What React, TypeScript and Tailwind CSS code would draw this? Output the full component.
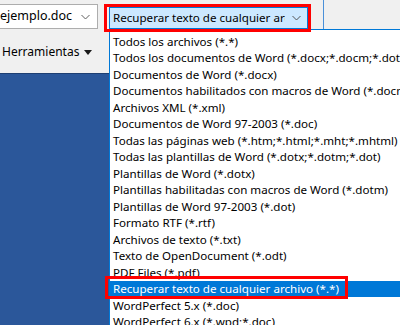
import React from "react";

const items = [
  "Todos los archivos (*.*)",
  "Todos los documentos de Word (*.docx;*.docm;*.dotx;*.dotm;*.doc;*.dot)",
  "Documentos de Word (*.docx)",
  "Documentos habilitados con macros de Word (*.docm)",
  "Archivos XML (*.xml)",
  "Documentos de Word 97-2003 (*.doc)",
  "Todas las páginas web (*.htm;*.html;*.mht;*.mhtml)",
  "Todas las plantillas de Word (*.dotx;*.dotm;*.dot)",
  "Plantillas de Word (*.dotx)",
  "Plantillas habilitadas con macros de Word (*.dotm)",
  "Plantillas de Word 97-2003 (*.dot)",
  "Formato RTF (*.rtf)",
  "Archivos de texto (*.txt)",
  "Texto de OpenDocument (*.odt)",
  "PDF Files (*.pdf)",
  "Recuperar texto de cualquier archivo (*.*)",
  "WordPerfect 5.x (*.doc)",
  "WordPerfect 6.x (*.wpd;*.doc)",
];

function Chevron({ color = "#444" }: { color?: string }) {
  return (
    <svg width="9" height="6" viewBox="0 0 9 6" className="shrink-0">
      <polyline points="0.5,1 4.5,5 8.5,1" fill="none" stroke={color} strokeWidth="1" />
    </svg>
  );
}

export default function App() {
  return (
    <div
      className="relative w-[400px] h-[325px] overflow-hidden bg-[#2b579a] text-[11.6px] text-black"
      style={{ fontFamily: '"Noto Sans", "Open Sans", sans-serif' }}
    >
      {/* top gray bar */}
      <div className="flex h-[74px] bg-[#f0f0f0] border-b border-[#1e3f73]">
        <div className="flex flex-col w-[109px] shrink-0">
          <div className="mt-[4px] ml-[-4px] w-[102px] h-[25px] bg-white border border-[#adadad] flex items-center pl-[3px] pr-[7px]">
            <span className="flex-1 whitespace-nowrap overflow-hidden text-[12.5px]">ejemplo.doc</span>
            <Chevron color="#606060" />
          </div>
          <div className="mt-[14px] flex items-center pl-[2px] pr-[17px] h-[18px]">
            <span className="flex-1 whitespace-nowrap text-[12px]">Herramientas</span>
            <svg width="8" height="5" viewBox="0 0 8 5">
              <polygon points="0,0 8,0 4,5" fill="#1a1a1a" />
            </svg>
          </div>
        </div>
        <div className="mt-[7px] w-[199px] h-[22px] shrink-0 bg-[#cce8ff] border border-[#0078d7] flex items-center pl-[3px] pr-[6px]">
          <span className="w-[172px] whitespace-nowrap overflow-hidden">Recuperar texto de cualquier archivo (*.*)</span>
          <span className="flex-1" />
          <Chevron color="#555" />
        </div>
        <div className="w-[15px] shrink-0" />
        <div className="w-[1px] h-[29px] bg-[#4a90d9] shrink-0" />
      </div>

      {/* dropdown list */}
      <div className="absolute left-[109px] top-[29px] w-[300px] h-[310px] bg-white border-l border-t border-[#0078d7] pt-[3px]">
        {items.map((t, i) => (
          <div
            key={i}
            className={
              i === 15
                ? "h-[16.5px] flex items-center pl-[3px] whitespace-nowrap bg-[#0078d7] text-white"
                : "h-[16.5px] flex items-center pl-[3px] whitespace-nowrap"
            }
          >
            {t}
          </div>
        ))}
      </div>

      {/* red highlight boxes */}
      <div className="absolute left-[104px] top-[4px] w-[207px] h-[28px] border-[3px] border-[#ff0000] pointer-events-none" />
      <div className="absolute left-[105px] top-[276px] w-[243px] h-[23px] border-[3px] border-[#ff0000] pointer-events-none" />
    </div>
  );
}
